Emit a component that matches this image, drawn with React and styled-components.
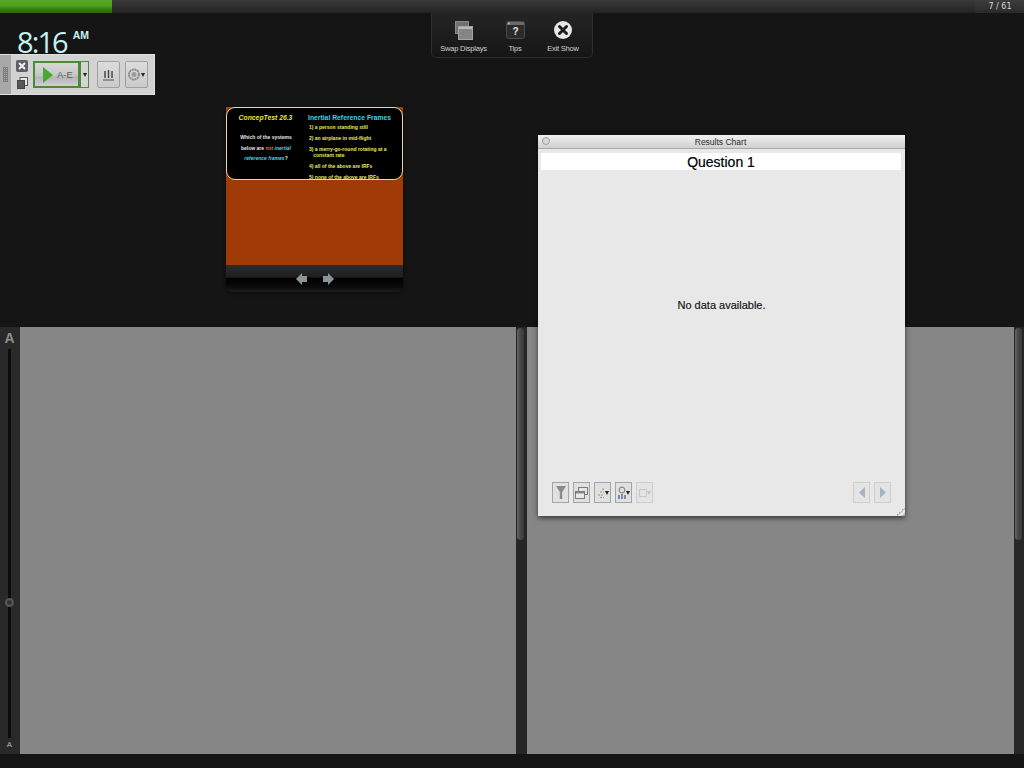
import styled, { createGlobalStyle } from 'styled-components'

const GlobalStyle = createGlobalStyle`
  html, body {
    margin: 0;
    padding: 0;
    background: #151515;
    font-family: "Liberation Sans", Arial, sans-serif;
  }
`

const Screen = styled.div`
  position: relative;
  width: 1024px;
  height: 768px;
  overflow: hidden;
  background: #151515;
  display: flex;
  flex-direction: column;
`

const TopBar = styled.div`
  height: 13px;
  flex: none;
  display: flex;
  background: linear-gradient(#3a3a3a, #2e2e2e 50%, #242424);
`

const Progress = styled.div`
  width: 112px;
  background: linear-gradient(#5aa82a, #4f9f1f 45%, #2f7a10 75%, #2a6a10);
`

const Spacer = styled.div`
  flex: 1;
`

const Counter = styled.div`
  width: 49px;
  background: linear-gradient(#3c3c3c, #2a2a2a);
  color: #d8d8d8;
  font-size: 8px;
  line-height: 13px;
  text-align: center;
  padding-left: 1px;
  box-sizing: border-box;
  font-family: "DejaVu Sans", sans-serif;
`

const Stage = styled.div`
  position: relative;
  height: 314px;
  flex: none;
`

const Clock = styled.div`
  position: absolute;
  left: 17px;
  top: 11px;
  display: flex;
  color: #c4f2f2;
  font-family: "Open Sans", sans-serif;
  font-weight: 400;
  font-size: 29px;
  line-height: 36px;
  letter-spacing: -1.9px;
`

const Meridiem = styled.span`
  font-family: "Liberation Sans", sans-serif;
  font-size: 10.5px;
  font-weight: 700;
  line-height: 12px;
  margin-left: 6px;
  margin-top: 5px;
  letter-spacing: 0;
`

const Popup = styled.div`
  position: absolute;
  left: 431px;
  top: 0;
  width: 162px;
  height: 45px;
  box-sizing: border-box;
  background: linear-gradient(#242424, #161616);
  border: 1px solid #2c2c2c;
  border-top: none;
  border-radius: 0 0 5px 5px;
  display: flex;
  padding-left: 4px;
`

const PopupItem = styled.div`
  width: ${(p) => p.$w}px;
  display: flex;
  flex-direction: column;
  align-items: center;
  color: #d0d0d0;
  font-size: 7.5px;
  letter-spacing: -0.2px;
  white-space: nowrap;
`

const PopupIcon = styled.div`
  height: 22px;
  margin-top: 6px;
  margin-bottom: 3px;
  display: flex;
  align-items: center;
`

const Slide = styled.div`
  position: absolute;
  left: 226px;
  top: 94px;
  width: 177px;
  height: 185px;
  border-radius: 0 0 6px 6px;
  box-shadow: 0 1px 4px rgba(0, 0, 0, 0.5);
  display: flex;
  flex-direction: column;
`

const SlideBody = styled.div`
  height: 158px;
  flex: none;
  background: #a03a06;
`

const SlideCard = styled.div`
  height: 73px;
  box-sizing: border-box;
  background: #000;
  border: 1px solid #e8d8a8;
  border-radius: 9px;
  display: grid;
  grid-template-columns: 76px 1fr;
  overflow: hidden;
`

const SlideLeft = styled.div`
  display: flex;
  flex-direction: column;
  align-items: center;
`

const SlideHeading = styled.div`
  color: ${(p) => p.$color};
  font-size: 6.8px;
  font-weight: 700;
  font-style: ${(p) => (p.$italic ? 'italic' : 'normal')};
  white-space: nowrap;
  margin: 6px 0 0 ${(p) => p.$offset || 0}px;
`

const SlideQuestion = styled.div`
  margin-top: 11px;
  color: #e8e8e8;
  font-size: 5px;
  font-weight: 700;
  line-height: 10.5px;
  text-align: center;
  padding-left: 2px;
`

const Hot = styled.span`
  color: ${(p) => p.$color};
  font-style: ${(p) => (p.$italic ? 'italic' : 'normal')};
`

const SlideList = styled.div`
  margin: 3px 0 0 6px;
  display: flex;
  flex-direction: column;
  gap: 5px;
  color: #e8e860;
  font-size: 5px;
  font-weight: 700;
  line-height: 6px;
`

const SlideFooter = styled.div`
  flex: 1;
  border-radius: 0 0 6px 6px;
  background: linear-gradient(#2c2c2c, #1e1e1e 45%, #000 50%, #0a0a0a 80%, #1a1e20);
  display: flex;
  align-items: center;
  justify-content: center;
  gap: 16px;
`

const ResultsWindow = styled.div`
  position: absolute;
  left: 538px;
  top: 122px;
  width: 367px;
  height: 381px;
  background: #e8e8e8;
  box-shadow: 0 2px 5px rgba(0, 0, 0, 0.6);
  display: flex;
  flex-direction: column;
  z-index: 2;
`

const TitleBar = styled.div`
  position: relative;
  height: 14px;
  flex: none;
  background: linear-gradient(#f0f0f0, #d0d0d0);
  border-bottom: 1px solid #a8a8a8;
  box-sizing: border-box;
  color: #2c2c2c;
  font-size: 8.5px;
  line-height: 14px;
  text-align: center;
  padding-right: 2px;
`

const CloseDot = styled.span`
  position: absolute;
  left: 4px;
  top: 2px;
  width: 8px;
  height: 8px;
  box-sizing: border-box;
  border-radius: 50%;
  border: 1px solid #a0a0a0;
  background: #d8d8d8;
`

const QuestionBand = styled.div`
  margin: 4px 4px 0 3px;
  height: 17px;
  flex: none;
  background: #fff;
  color: #000;
  font-size: 14px;
  line-height: 18px;
  text-align: center;
  -webkit-text-stroke: 0.2px #000;
`

const EmptyMessage = styled.div`
  flex: 1;
  display: flex;
  align-items: center;
  justify-content: center;
  color: #111;
  font-size: 11px;
  padding-bottom: 42px;
  -webkit-text-stroke: 0.15px #111;
`

const ChartTools = styled.div`
  height: 21px;
  flex: none;
  margin-bottom: 13px;
  padding: 0 14px 0 14px;
  display: flex;
  align-items: center;
  gap: 4px;
`

const ToolButton = styled.div`
  width: 17px;
  height: 21px;
  box-sizing: border-box;
  border: 1px solid ${(p) => (p.$dim ? '#cfcfcf' : '#a4a4a4')};
  background: ${(p) => (p.$dim ? '#e4e4e4' : '#e0e0e0')};
  display: flex;
  align-items: center;
  justify-content: center;
`

const Grip = styled.div`
  position: absolute;
  right: 0;
  bottom: 0;
  width: 9px;
  height: 9px;
  background: linear-gradient(135deg, #e8e8e8 50%, #a8a8a8 50%, #f4f4f4 70%, #909090);
`

const FloatingBar = styled.div`
  position: absolute;
  left: 0;
  top: 41px;
  width: 155px;
  height: 41px;
  background: #d2d2d2;
  border: 1px solid #e0e0e0;
  border-left: none;
  box-sizing: border-box;
  display: flex;
  align-items: center;
  z-index: 3;
`

const Handle = styled.div`
  width: 11px;
  align-self: stretch;
  flex: none;
  background-color: #a8a8a8;
  padding: 12px 3px;
  box-sizing: border-box;
  display: flex;
`

const HandleDots = styled.div`
  flex: 1;
  background-image: linear-gradient(#7e7e7e 1px, transparent 1px), linear-gradient(90deg, #7e7e7e 1px, transparent 1px);
  background-size: 2px 2px;
`

const SmallIcons = styled.div`
  width: 22px;
  flex: none;
  display: flex;
  flex-direction: column;
  align-items: center;
  gap: 5px;
`

const PlayGroup = styled.div`
  display: flex;
`

const PlayButton = styled.div`
  width: 47px;
  height: 27px;
  box-sizing: border-box;
  border: 2px solid #4c8a38;
  background: linear-gradient(#d8d8d8, #c6c6c6 55%, #b4b4b4 62%, #d0d0d0);
  display: flex;
  align-items: center;
  padding-left: 8px;
  gap: 4px;
  color: #5c5c5c;
  font-size: 9.5px;
`

const PlayMenu = styled.div`
  width: 9px;
  height: 27px;
  box-sizing: border-box;
  border: 1px solid #4c8a38;
  background: #d4d4d4;
  display: flex;
  align-items: center;
  justify-content: center;
`

const BarButton = styled.div`
  width: 23px;
  height: 27px;
  box-sizing: border-box;
  margin-left: ${(p) => p.$gap}px;
  border: 1px solid #a0a0a0;
  border-radius: 2px;
  background: linear-gradient(#dcdcdc, #cacaca);
  display: flex;
  align-items: center;
  justify-content: center;
  gap: 1px;
`

const Caret = styled.span`
  width: 0;
  height: 0;
  border-left: 2.5px solid transparent;
  border-right: 2.5px solid transparent;
  border-top: 4px solid ${(p) => p.$color || '#222'};
`

const Panels = styled.div`
  height: 427px;
  flex: none;
  display: flex;
  background: #242424;
`

const LevelColumn = styled.div`
  width: 20px;
  flex: none;
  background: #292929;
  display: flex;
  flex-direction: column;
  align-items: center;
  color: #8e8e8e;
`

const LevelTop = styled.div`
  font-size: 14px;
  font-weight: 700;
  line-height: 14px;
  margin-top: 4px;
  margin-right: 1px;
`

const LevelTrack = styled.div`
  position: relative;
  flex: 1;
  width: 3px;
  margin: 4px 1px 1px 0;
  background: #0c0c0c;
`

const LevelKnob = styled.div`
  position: absolute;
  left: -3px;
  top: 249px;
  width: 9px;
  height: 9px;
  border-radius: 50%;
  background: radial-gradient(#333 25%, #5a5a5a 50%, #444);
`

const LevelBottom = styled.div`
  font-size: 8px;
  font-weight: 700;
  line-height: 12px;
  margin-bottom: 3px;
  margin-right: 1px;
`

const Pane = styled.div`
  flex: ${(p) => p.$w}px 0 0;
  background: #868686;
`

const ScrollGutter = styled.div`
  width: ${(p) => p.$w}px;
  flex: none;
  background: #262626;
  box-sizing: border-box;
  padding-left: 1px;
`

const ScrollThumb = styled.div`
  width: 7px;
  height: 212px;
  margin-top: 1px;
  border-radius: 4px;
  background: linear-gradient(90deg, #666, #4a4a4a 40%, #3a3a3a);
`

const Play = () => (
  <svg width="10" height="16" viewBox="0 0 10 16">
    <path d="M0 0 L10 8 L0 16 Z" fill="#49a82e" />
  </svg>
)

const SwapIcon = () => (
  <svg width="18" height="19" viewBox="0 0 18 19">
    <rect x="0.5" y="0.5" width="13" height="12" fill="#707070" stroke="#8c8c8c" />
    <rect x="3.5" y="5.5" width="14" height="13" fill="#858585" stroke="#a4a4a4" />
    <rect x="4" y="6" width="13" height="2" fill="#b8b8b8" />
  </svg>
)

const TipsIcon = () => (
  <svg width="19" height="18" viewBox="0 0 19 18">
    <rect x="0.5" y="0.5" width="18" height="17" rx="2" fill="#2b2b2b" stroke="#4a4a4a" />
    <rect x="1" y="1" width="17" height="3" fill="#6a6a6a" />
    <circle cx="3" cy="2.5" r="1" fill="#bbb" />
    <text x="9.5" y="14" textAnchor="middle" fontSize="10" fontWeight="700" fill="#e6e6e6" fontFamily="Liberation Sans">?</text>
  </svg>
)

const ExitIcon = () => (
  <svg width="18" height="18" viewBox="0 0 18 18">
    <circle cx="9" cy="9" r="9" fill="#e6e6e6" />
    <path d="M5.5 5.5 L12.5 12.5 M12.5 5.5 L5.5 12.5" stroke="#1c1c1c" strokeWidth="3" strokeLinecap="round" />
  </svg>
)

const Arrow = ({ flip }) => (
  <svg width="11" height="12" viewBox="0 0 11 12" style={flip ? { transform: 'scaleX(-1)' } : undefined}>
    <path d="M0 6 L6 0 L6 3 L11 3 L11 9 L6 9 L6 12 Z" fill="#8d9496" />
  </svg>
)

const CloseSquare = () => (
  <svg width="12" height="12" viewBox="0 0 12 12">
    <rect width="12" height="12" rx="2" fill="#5c6066" />
    <path d="M3 3 L9 9 M9 3 L3 9" stroke="#f0f0f0" strokeWidth="2" />
  </svg>
)

const CopySquare = () => (
  <svg width="11" height="12" viewBox="0 0 11 12">
    <rect x="3" y="0.5" width="7.5" height="8" fill="#e8e8e8" stroke="#555" />
    <rect x="0.5" y="3.5" width="7" height="8" fill="#55595e" stroke="#444" />
  </svg>
)

const Bars = () => (
  <svg width="11" height="12" viewBox="0 0 11 12">
    <path d="M2 2 V9 M5.5 1 V9 M9 2 V9" stroke="#4a4a4a" strokeWidth="1.5" />
    <path d="M0 11 H11" stroke="#666" strokeWidth="1.2" />
  </svg>
)

const Gear = () => (
  <svg width="12" height="13" viewBox="0 0 12 13">
    <circle cx="6" cy="6.5" r="5" fill="none" stroke="#8a8a8a" strokeWidth="2" strokeDasharray="2 0.6" />
    <circle cx="6" cy="6.5" r="2.5" fill="#9a9a9a" />
  </svg>
)

const Funnel = () => (
  <svg width="10" height="13" viewBox="0 0 10 13">
    <path d="M0 0 H10 L6.2 6 V13 H3.8 V6 Z" fill="#8a8a8a" />
  </svg>
)

const Windows = () => (
  <svg width="13" height="12" viewBox="0 0 13 12">
    <rect x="3.5" y="0.5" width="9" height="7" fill="#e4e4e4" stroke="#7a7a7a" />
    <rect x="0.5" y="4.5" width="9" height="7" fill="#e8e8e8" stroke="#7a7a7a" />
    <rect x="1" y="5" width="8" height="1.5" fill="#8a8a8a" />
  </svg>
)

const ListMenu = () => (
  <svg width="8" height="10" viewBox="0 0 8 10">
    <path d="M5 1 H8 M3 4 H7 M1 7 H6 M3 9.5 H7" stroke="#7aa86a" strokeWidth="1.2" strokeDasharray="2 1" />
  </svg>
)

const ChartMenu = () => (
  <svg width="8" height="14" viewBox="0 0 8 14">
    <circle cx="4" cy="4" r="2.8" fill="none" stroke="#8a8a8a" strokeWidth="1.2" />
    <path d="M1 13 V9 M4 13 V8 M7 13 V9" stroke="#4a6a90" strokeWidth="1.4" />
  </svg>
)

const DimMenu = () => (
  <svg width="8" height="8" viewBox="0 0 8 8">
    <rect x="0.5" y="0.5" width="7" height="7" fill="none" stroke="#c8c8c8" />
  </svg>
)

const Triangle = ({ flip }) => (
  <svg width="6" height="11" viewBox="0 0 6 11" style={flip ? { transform: 'scaleX(-1)' } : undefined}>
    <path d="M6 0 V11 L0 5.5 Z" fill="#a4b4c0" />
  </svg>
)

const App = () => (
  <Screen>
    <GlobalStyle />
    <TopBar>
      <Progress />
      <Spacer />
      <Counter>7 / 61</Counter>
    </TopBar>
    <Stage>
      <Clock>
        8:16<Meridiem>AM</Meridiem>
      </Clock>
      <Popup>
        <PopupItem $w={55}>
          <PopupIcon><SwapIcon /></PopupIcon>
          Swap Displays
        </PopupItem>
        <PopupItem $w={48}>
          <PopupIcon><TipsIcon /></PopupIcon>
          Tips
        </PopupItem>
        <PopupItem $w={48}>
          <PopupIcon><ExitIcon /></PopupIcon>
          Exit Show
        </PopupItem>
      </Popup>
      <FloatingBar>
        <Handle><HandleDots /></Handle>
        <SmallIcons>
          <CloseSquare />
          <CopySquare />
        </SmallIcons>
        <PlayGroup>
          <PlayButton><Play />A-E</PlayButton>
          <PlayMenu><Caret /></PlayMenu>
        </PlayGroup>
        <BarButton $gap={8}><Bars /></BarButton>
        <BarButton $gap={5}><Gear /><Caret /></BarButton>
      </FloatingBar>
      <Slide>
        <SlideBody>
          <SlideCard>
            <SlideLeft>
              <SlideHeading $color="#e6e632" $italic $offset={1}>ConcepTest 26.3</SlideHeading>
              <SlideQuestion>
                Which of the systems<br />
                below are <Hot $color="#e8742a">not</Hot> <Hot $color="#45d8e0" $italic>inertial</Hot><br />
                <Hot $color="#45d8e0" $italic>reference frames</Hot>?
              </SlideQuestion>
            </SlideLeft>
            <div>
              <SlideHeading $color="#35d5e5" $offset={5}>Inertial Reference Frames</SlideHeading>
              <SlideList>
                <div>1) a person standing still</div>
                <div>2) an airplane in mid-flight</div>
                <div>3) a merry-go-round rotating at a<br />&nbsp;&nbsp;&nbsp;constant rate</div>
                <div>4) all of the above are IRFs</div>
                <div>5) none of the above are IRFs</div>
              </SlideList>
            </div>
          </SlideCard>
        </SlideBody>
        <SlideFooter>
          <Arrow />
          <Arrow flip />
        </SlideFooter>
      </Slide>
      <ResultsWindow>
        <TitleBar>
          <CloseDot />
          Results Chart
        </TitleBar>
        <QuestionBand>Question 1</QuestionBand>
        <EmptyMessage>No data available.</EmptyMessage>
        <ChartTools>
          <ToolButton><Funnel /></ToolButton>
          <ToolButton><Windows /></ToolButton>
          <ToolButton><ListMenu /><Caret /></ToolButton>
          <ToolButton><ChartMenu /><Caret /></ToolButton>
          <ToolButton $dim><DimMenu /><Caret $color="#c4c4c4" /></ToolButton>
          <Spacer />
          <ToolButton $dim><Triangle /></ToolButton>
          <ToolButton $dim><Triangle flip /></ToolButton>
        </ChartTools>
        <Grip />
      </ResultsWindow>
    </Stage>
    <Panels>
      <LevelColumn>
        <LevelTop>A</LevelTop>
        <LevelTrack><LevelKnob /></LevelTrack>
        <LevelBottom>A</LevelBottom>
      </LevelColumn>
      <Pane $w={496} />
      <ScrollGutter $w={11}><ScrollThumb /></ScrollGutter>
      <Pane $w={487} />
      <ScrollGutter $w={10}><ScrollThumb /></ScrollGutter>
    </Panels>
  </Screen>
)

export default App
